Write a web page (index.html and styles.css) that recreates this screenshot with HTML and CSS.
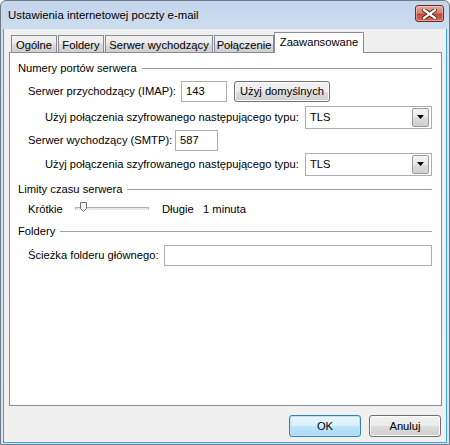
FILE: index.html
```html
<!DOCTYPE html>
<html>
<head>
<meta charset="utf-8">
<link rel="stylesheet" href="styles.css">
</head>
<body>
<div class="window">
  <div class="titlebar">
    <span class="title">Ustawienia internetowej poczty e-mail</span>
    <div class="close">
      <svg width="15" height="10" viewBox="0 0 15 10">
        <path d="M2 1 L13 9 M13 1 L2 9" stroke="#3a2020" stroke-width="4" stroke-linecap="square"/>
        <path d="M2 1 L13 9 M13 1 L2 9" stroke="#ffffff" stroke-width="2.2" stroke-linecap="square"/>
      </svg>
    </div>
  </div>
  <div class="client">
    <div class="tabs">
      <div class="tab t1">Ogólne</div>
      <div class="tab t2">Foldery</div>
      <div class="tab t3">Serwer wychodzący</div>
      <div class="tab t4">Połączenie</div>
      <div class="tab active">Zaawansowane</div>
    </div>
    <div class="panel">
      <div class="group g1"><span>Numery portów serwera</span><div class="rule"></div></div>
      <div class="row r-imap">
        <span class="lbl l-imap">Serwer przychodzący (IMAP):</span>
        <div class="textbox tb-imap">143</div>
        <div class="btn btn-def">Użyj domyślnych</div>
      </div>
      <div class="row r-sel1">
        <span class="lbl l-enc">Użyj połączenia szyfrowanego następującego typu:</span>
        <div class="select"><span>TLS</span><div class="drop"><svg width="7" height="4" viewBox="0 0 7 4"><path d="M0 0 H7 L3.5 4 Z" fill="#000"/></svg></div></div>
      </div>
      <div class="row r-smtp">
        <span class="lbl l-smtp">Serwer wychodzący (SMTP):</span>
        <div class="textbox tb-smtp">587</div>
      </div>
      <div class="row r-sel2">
        <span class="lbl l-enc">Użyj połączenia szyfrowanego następującego typu:</span>
        <div class="select"><span>TLS</span><div class="drop"><svg width="7" height="4" viewBox="0 0 7 4"><path d="M0 0 H7 L3.5 4 Z" fill="#000"/></svg></div></div>
      </div>
      <div class="group g2"><span>Limity czasu serwera</span><div class="rule"></div></div>
      <div class="row r-slider">
        <span class="lbl l-short">Krótkie</span>
        <div class="slider">
          <div class="track"></div>
          <svg class="thumb" width="7" height="10" viewBox="0 0 7 10"><path d="M0.5 0.5 H6.5 V6.5 L3.5 9.5 L0.5 6.5 Z" fill="#f4f4f4" stroke="#707070"/></svg>
        </div>
        <span class="lbl l-long">Długie</span>
        <span class="lbl">1 minuta</span>
      </div>
      <div class="group g3"><span>Foldery</span><div class="rule"></div></div>
      <div class="row r-path">
        <span class="lbl l-path">Ścieżka folderu głównego:</span>
        <div class="textbox tb-path"></div>
      </div>
    </div>
    <div class="footer">
      <div class="btn btn-ok">OK</div>
      <div class="btn btn-cancel">Anuluj</div>
    </div>
  </div>
</div>
</body>
</html>
```
FILE: styles.css
```css
* { box-sizing: border-box; }
html, body { margin: 0; padding: 0; }
body {
  width: 450px;
  height: 445px;
  overflow: hidden;
  background: #ffffff;
  font-family: "Liberation Sans", Arial, sans-serif;
  font-size: 11.2px;
  color: #000;
}
.window {
  width: 450px;
  height: 445px;
  background: linear-gradient(#c2d5ec, #d3e1f1 40px, #d7e4f2);
  border: 1px solid #6e7a86;
  border-radius: 6px 6px 0 0;
  display: flex;
  flex-direction: column;
  padding: 0 2px 1px 2px;
}
.titlebar {
  height: 28px;
  display: flex;
  align-items: flex-start;
  justify-content: space-between;
}
.title {
  margin: 6px 0 0 5px;
  font-size: 11.4px;
  line-height: 16px;
  color: #000;
}
.close {
  margin: 4px 3px 0 0;
  width: 29px;
  height: 17px;
  border: 1px solid #6b2b24;
  border-radius: 3px;
  background: linear-gradient(#eaa99b, #d87f6d 45%, #c24a35 55%, #cf6d55);
  display: flex;
  align-items: center;
  justify-content: center;
  box-shadow: inset 0 0 0 1px rgba(255,255,255,0.35);
}
.client {
  flex: 1;
  background: #f0f0f0;
  border-left: 1px solid #3aa4e2;
  border-right: 1px solid #3aa4e2;
  border-bottom: 1px solid #3aa4e2;
  padding: 3px 4px 0 5px;
  display: flex;
  flex-direction: column;
}
.tabs {
  display: flex;
  align-items: flex-end;
  height: 21px;
  margin-bottom: -1px;
  padding-left: 2px;
  position: relative;
  z-index: 1;
}
.tab {
  height: 17px;
  margin-bottom: 1px;
  margin-right: 1px;
  border: 1px solid #898c95;
  border-bottom: none;
  background: linear-gradient(#f2f2f2, #ebebeb 50%, #dddddd 50%, #cfcfcf);
  display: flex;
  align-items: center;
  justify-content: center;
  padding-top: 1px;
  white-space: nowrap;
}
.t1 { width: 46px; }
.t2 { width: 46px; }
.t3 { width: 108px; }
.t4 { width: 60px; margin-right: 0; }
.tab.active {
  width: 90px;
  height: 21px;
  margin-bottom: 0;
  background: #ffffff;
  padding-top: 0;
  padding-bottom: 3px;
}
.panel {
  height: 354px;
  background: #ffffff;
  border: 1px solid #898c95;
  padding: 6px 9px 0 8px;
  display: flex;
  flex-direction: column;
}
.group {
  height: 18px;
  display: flex;
  align-items: center;
  color: #000;
}
.group .rule {
  flex: 1;
  height: 1px;
  background: #a0a0a0;
  margin-left: 5px;
  margin-top: 1px;
}
.row {
  display: flex;
  align-items: center;
  padding-left: 10px;
}
.lbl { white-space: nowrap; }
.r-imap { height: 22px; margin-top: 3px; }
.r-sel1 { height: 24px; margin-top: 3px; padding-left: 27px; }
.r-smtp { height: 22px; margin-top: 0px; }
.r-sel2 { height: 24px; margin-top: 1px; padding-left: 27px; }
.g2 { margin-top: 4px; }
.r-slider { height: 18px; margin-top: 2px; }
.g3 { margin-top: 4px; }
.r-path { height: 22px; margin-top: 4px; }

.textbox {
  height: 21px;
  border: 1px solid #abadb3;
  background: #fff;
  padding-left: 4px;
  display: flex;
  align-items: center;
}
.l-imap { width: 153px; }
.tb-imap { width: 46px; }
.l-smtp { width: 147px; }
.tb-smtp { width: 43px; }
.l-path { width: 136px; }
.tb-path { flex: 1; }

.btn {
  height: 21px;
  border: 1px solid #707070;
  border-radius: 3px;
  background: linear-gradient(#f2f2f2, #ebebeb 50%, #dddddd 50%, #cfcfcf);
  box-shadow: inset 0 0 0 1px #fcfcfc;
  display: flex;
  align-items: center;
  justify-content: center;
  white-space: nowrap;
}
.btn-def { width: 96px; margin-left: 7px; }

.l-enc { width: 260px; }
.select {
  flex: 1;
  height: 23px;
  border: 1px solid #abadb3;
  background: #fff;
  display: flex;
  align-items: center;
  justify-content: space-between;
  padding: 0 2px 0 4px;
}
.drop {
  width: 17px;
  height: 19px;
  border: 1px solid #9a9a9a;
  border-radius: 2px;
  background: linear-gradient(#f2f2f2, #ebebeb 50%, #dddddd 50%, #cfcfcf);
  display: flex;
  align-items: center;
  justify-content: center;
}

.l-short { width: 47px; }
.slider {
  width: 74px;
  height: 18px;
  position: relative;
  display: flex;
  align-items: center;
  margin-right: 13px;
}
.track {
  width: 100%;
  height: 3px;
  margin-top: -2px;
  border: 1px solid #b0b0b0;
  border-bottom-color: #e6e6e6;
  background: #e7eaea;
}
.thumb {
  position: absolute;
  left: 5px;
  top: 2px;
}
.l-long { width: 41px; }

.footer {
  display: flex;
  justify-content: flex-end;
  padding-top: 9px;
  padding-right: 1px;
}
.footer .btn { width: 72px; height: 22px; }
.btn-ok {
  margin-right: 8px;
  border-color: #3c7fb1;
  background: linear-gradient(#eaf6fd, #d9f0fc 50%, #bee6fd 50%, #a7d9f5);
  box-shadow: inset 0 0 0 1px #bfe3f7;
}
```
